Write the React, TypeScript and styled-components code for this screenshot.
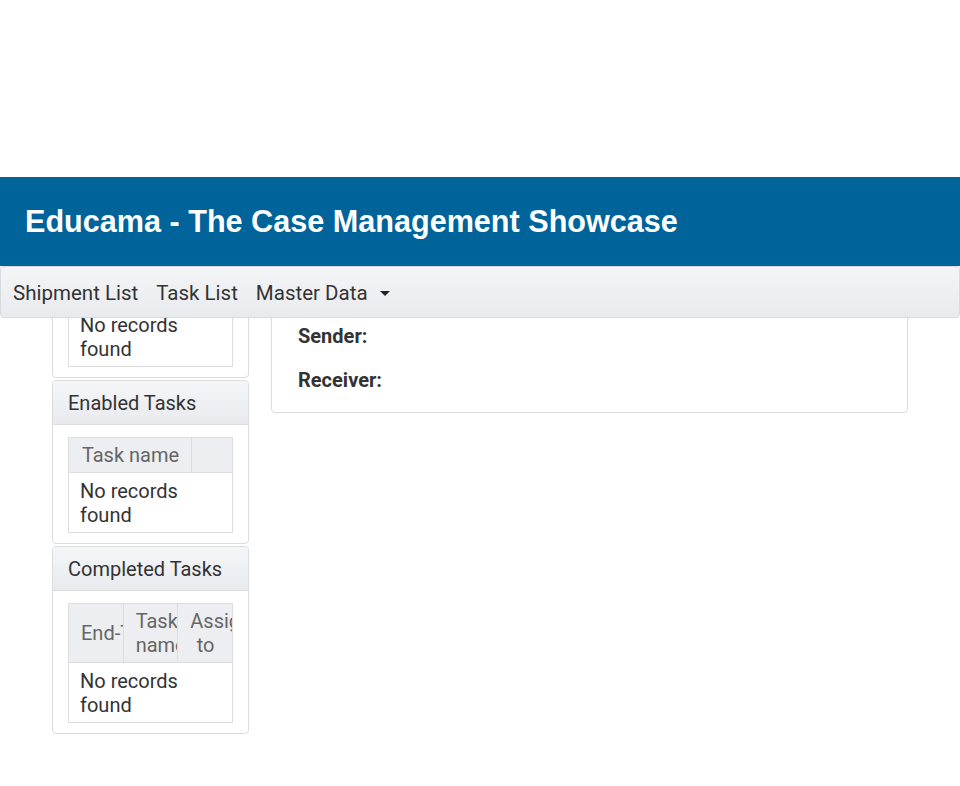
import React from 'react';
import styled, { createGlobalStyle } from 'styled-components';

const GlobalStyle = createGlobalStyle`
  * {
    box-sizing: border-box;
  }
  html,
  body {
    margin: 0;
    padding: 0;
    background: #ffffff;
  }
  body {
    font-family: Roboto, 'Liberation Sans', Arial, sans-serif;
    font-size: 20px;
    line-height: 24px;
    color: #333333;
  }
`;

type TaskTable = {
  columns: string[];
  widths?: (string | undefined)[];
};

type TaskPanel = {
  title: string;
  table: TaskTable;
};

const panels: TaskPanel[] = [
  { title: 'Active Tasks', table: { columns: ['Task name', ''], widths: [undefined, '41px'] } },
  { title: 'Enabled Tasks', table: { columns: ['Task name', ''], widths: [undefined, '41px'] } },
  { title: 'Completed Tasks', table: { columns: ['End-Time', 'Task name', 'Assigned to'] } },
];

const fields = ['Tracking Id:', 'Customer:', 'Sender:', 'Receiver:'];

const menu = ['Shipment List', 'Task List'];

// hyphenated words stay on one line in the header cells
const renderHeading = (text: string) =>
  text.split(' ').map((word, index) => (
    <React.Fragment key={index}>
      {index > 0 && ' '}
      {word.includes('-') ? <Word>{word}</Word> : word}
    </React.Fragment>
  ));

const App = (): JSX.Element => {
  return (
    <Page>
      <GlobalStyle />
      <TopBar>
        <Banner>
          <Title>Educama - The Case Management Showcase</Title>
        </Banner>
        <NavBar>
          {menu.map((item) => (
            <NavItem key={item}>{item}</NavItem>
          ))}
          <NavItem>
            Master Data
            <Caret />
          </NavItem>
        </NavBar>
      </TopBar>

      <Content>
        <Sidebar>
          {panels.map((panel) => (
            <Panel key={panel.title}>
              <PanelHeading>{panel.title}</PanelHeading>
              <PanelBody>
                <Table>
                  <colgroup>
                    {panel.table.columns.map((col, index) => (
                      <Col key={index} $width={panel.table.widths?.[index]} />
                    ))}
                  </colgroup>
                  <thead>
                    <tr>
                      {panel.table.columns.map((col, index) => (
                        <HeadCell key={index}>{renderHeading(col)}</HeadCell>
                      ))}
                    </tr>
                  </thead>
                  <tbody>
                    <tr>
                      <Cell colSpan={panel.table.columns.length}>No records found</Cell>
                    </tr>
                  </tbody>
                </Table>
              </PanelBody>
            </Panel>
          ))}
        </Sidebar>

        <DetailCard>
          {fields.map((field) => (
            <FieldLabel key={field}>{field}</FieldLabel>
          ))}
        </DetailCard>
      </Content>
    </Page>
  );
};

const Page = styled.div`
  padding-top: 177px;
  padding-bottom: 40px;
`;

const TopBar = styled.div`
  position: relative;
  z-index: 2;
`;

const Banner = styled.header`
  height: 89px;
  display: flex;
  align-items: center;
  padding-left: 25px;
  padding-bottom: 2px;
  background: #00639a;
`;

const Title = styled.h1`
  margin: 0;
  font-family: 'Liberation Sans', Arial, sans-serif;
  font-size: 30.6px;
  font-weight: 700;
  line-height: 36px;
  color: #ffffff;
`;

const NavBar = styled.nav`
  height: 52px;
  display: flex;
  align-items: center;
  gap: 18px;
  padding: 2px 12px 0;
  background: linear-gradient(to bottom, #f4f5f7 0%, #e9eaed 100%);
  border: 1px solid #d7d9dc;
  border-radius: 4px;
`;

const NavItem = styled.div`
  display: flex;
  align-items: center;
  font-size: 20.5px;
  color: #333333;
  white-space: nowrap;
`;

const Caret = styled.span`
  display: inline-block;
  margin-left: 12px;
  width: 0;
  height: 0;
  border-left: 5px solid transparent;
  border-right: 5px solid transparent;
  border-top: 5px solid #222222;
`;

const Content = styled.main`
  margin-top: -104px;
  padding: 0 52px;
  display: grid;
  grid-template-columns: 197px 1fr;
  column-gap: 22px;
  align-items: start;
`;

const Sidebar = styled.aside`
  display: flex;
  flex-direction: column;
  gap: 2px;
`;

const Panel = styled.section`
  background: #ffffff;
  border: 1px solid #dcdcdc;
  border-radius: 4px;
`;

const PanelHeading = styled.div`
  padding: 10px 15px 9px;
  background: linear-gradient(to bottom, #f5f6f8 0%, #e9eaed 100%);
  border-bottom: 1px solid #dcdcdc;
  border-radius: 3px 3px 0 0;
  color: #333333;
`;

const PanelBody = styled.div`
  padding: 12px 15px 10px;
`;

const Table = styled.table`
  width: 100%;
  table-layout: fixed;
  border-collapse: collapse;
  border: 1px solid #dddddd;
`;

const Col = styled.col<{ $width?: string }>`
  width: ${(p) => p.$width ?? 'auto'};
`;

const HeadCell = styled.th`
  padding: 5px 11px 5px 12px;
  background: #eceef1;
  border: 1px solid #dddddd;
  color: #666666;
  font-weight: 400;
  text-align: center;
  vertical-align: middle;
  overflow: hidden;
`;

const Word = styled.span`
  white-space: nowrap;
`;

const Cell = styled.td`
  padding: 6px 12px 5px 11px;
  border: 1px solid #dddddd;
  color: #333333;
  text-align: left;
`;

const DetailCard = styled.section`
  display: flex;
  flex-direction: column;
  gap: 20px;
  padding: 21px 26px 20px;
  background: #ffffff;
  border: 1px solid #dcdcdc;
  border-radius: 4px;
`;

const FieldLabel = styled.div`
  font-weight: 700;
  color: #333333;
`;

export default App;
